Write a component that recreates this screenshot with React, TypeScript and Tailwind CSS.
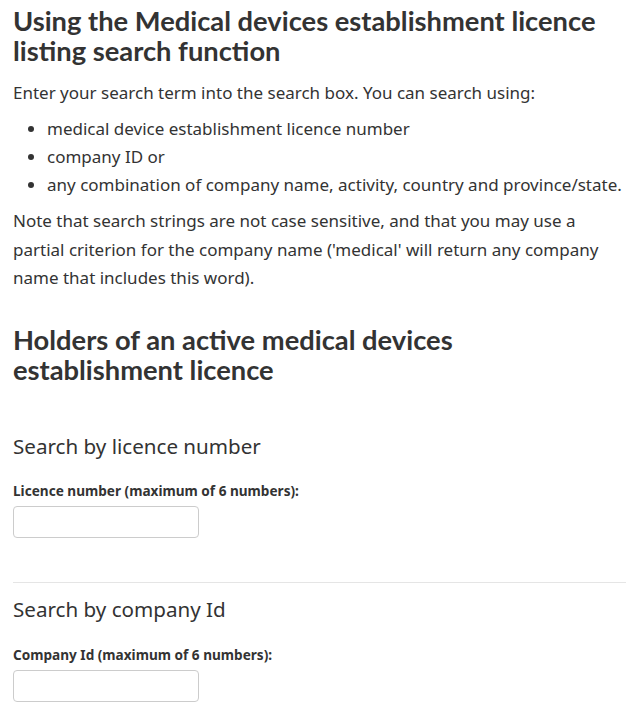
export default function App() {
  return (
    <div className="bg-white text-[#333] pl-[13px] pr-[4px] pt-[6px] font-['Noto_Sans',sans-serif]">
      {/* Intro */}
      <h1 className="font-['Lato',sans-serif] font-bold text-[27.3px] leading-[30px] mb-[13px]">
        Using the Medical devices establishment licence listing search function
      </h1>
      <p className="text-[17px] leading-[28px] mb-[8px]">
        Enter your search term into the search box. You can search using:
      </p>
      <ul className="text-[17px] leading-[28px] mb-[8px] pl-[34px] list-disc">
        <li>medical device establishment licence number</li>
        <li>company ID or</li>
        <li>any combination of company name, activity, country and province/state.</li>
      </ul>
      <p className="text-[17px] leading-[28.5px] pr-[10px]">
        Note that search strings are not case sensitive, and that you may use a partial criterion for the
        company name ('medical' will return any company name that includes this word).
      </p>

      {/* Holders */}
      <h2 className="font-['Lato',sans-serif] font-bold text-[27.3px] leading-[30px] mt-[32px] mb-[47px] pr-[150px]">
        Holders of an active medical devices establishment licence
      </h2>

      <h3 className="text-[20.6px] leading-[28px] mb-[21px]">Search by licence number</h3>
      <label className="block text-[13.6px] leading-[20px] font-bold mb-[5px]">
        Licence number (maximum of 6 numbers):
      </label>
      <input
        type="text"
        className="block w-[186px] h-[32px] border border-[#ccc] rounded-[4px] bg-white"
      />

      <hr className="border-t border-[#e5e5e5] mt-[44px] mb-[12px]" />

      <h3 className="text-[20.6px] leading-[28px] mb-[22px]">Search by company Id</h3>
      <label className="block text-[13.6px] leading-[20px] font-bold mb-[5px]">
        Company Id (maximum of 6 numbers):
      </label>
      <input
        type="text"
        className="block w-[186px] h-[32px] border border-[#ccc] rounded-[4px] bg-white"
      />
    </div>
  );
}
